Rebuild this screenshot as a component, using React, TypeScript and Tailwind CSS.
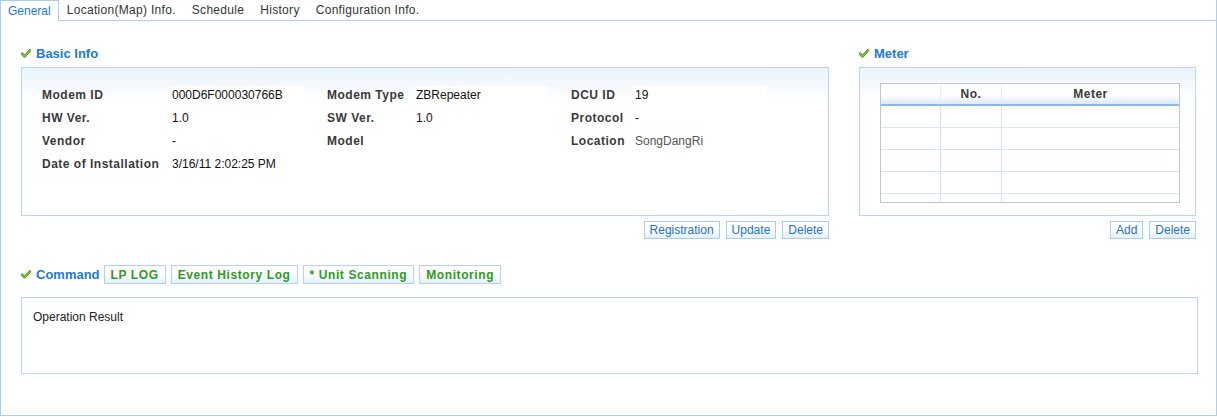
import React from 'react';

const Check = () => (
  <svg width="10" height="9" viewBox="0 0 10 9" className="shrink-0">
    <path d="M1 4.6 L3.6 7.4 L9 1.4" fill="none" stroke="#4f8f1c" strokeWidth="2.6" strokeLinecap="round" strokeLinejoin="round" />
    <path d="M1 4.6 L3.6 7.4 L9 1.4" fill="none" stroke="#8cc63f" strokeWidth="1.2" strokeLinecap="round" strokeLinejoin="round" />
  </svg>
);

function SectionTitle({ children }: { children: React.ReactNode }) {
  return (
    <div className="flex items-center gap-[5px] h-[16px]">
      <Check />
      <span className="text-[13px] font-bold tracking-[0px] text-[#1b7bd0] leading-none">{children}</span>
    </div>
  );
}

function BlueButton({ children }: { children: React.ReactNode }) {
  return (
    <button className="h-[18px] px-[5px] border border-[#aacde9] bg-[linear-gradient(to_bottom,#ffffff_45%,#e2effb_100%)] text-[12px] leading-none text-[#1f6fc5]">
      {children}
    </button>
  );
}

function CmdButton({ children }: { children: React.ReactNode }) {
  return (
    <button className="h-[19px] px-[6px] border border-[#b3d3ee] bg-[linear-gradient(to_bottom,#ffffff_45%,#e3f0fb_100%)] text-[12px] font-bold tracking-[0.6px] leading-none text-[#2f9a22]">
      {children}
    </button>
  );
}

const rows: [string, string, string, string, string, string][] = [
  ['Modem ID', '000D6F000030766B', 'Modem Type', 'ZBRepeater', 'DCU ID', '19'],
  ['HW Ver.', '1.0', 'SW Ver.', '1.0', 'Protocol', '-'],
  ['Vendor', '-', 'Model', '', 'Location', 'SongDangRi'],
  ['Date of Installation', '3/16/11 2:02:25 PM', '', '', '', ''],
];

const label = 'text-[12px] font-bold tracking-[0.5px] text-[#3a3a3a] whitespace-nowrap';
const value = 'text-[12px] text-[#111] whitespace-nowrap';
const firstCell = 'inline-flex items-center -ml-[2px] pl-[2px] w-[134px] h-[18px] bg-white';

export default function App() {
  return (
    <div className="w-[1217px] h-[417px] bg-white font-['Liberation_Sans',Arial,sans-serif] flex flex-col">
      {/* tabs */}
      <div className="flex h-[21px] shrink-0">
        <div className="h-[21px] px-[7px] border-l border-t border-r border-[#a9d0f0] bg-white flex items-center text-[12px] text-[#1b7bd0]">
          General
        </div>
        <div className="flex-1 flex border-b border-r border-[#a9d0f0] text-[12px] text-[#333]">
          {['Location(Map) Info.', 'Schedule', 'History', 'Configuration Info.'].map((t) => (
            <div key={t} className="px-[8px] flex items-center tracking-[0.3px]">{t}</div>
          ))}
        </div>
      </div>

      {/* panel */}
      <div className="h-[395px] border-l border-r border-b border-[#a9d0f0] pl-[20px] pr-[19px] pt-[24px]">
        <div className="flex gap-[30px]">
          {/* basic info */}
          <div className="w-[808px] flex flex-col">
            <SectionTitle>Basic Info</SectionTitle>
            <div className="mt-[6px] h-[149px] border border-[#bcd6ee] bg-[linear-gradient(to_bottom,#eaf3fd_0px,#ffffff_34px)] pl-[20px] pt-[15px]">
              <div className="grid grid-cols-[130px_155px_89px_155px_64px_1fr] auto-rows-[23px] items-center">
                {rows.map((r, i) => (
                  <React.Fragment key={i}>
                    <div className={label}>{r[0]}</div>
                    <div className={value}>
                      <span className={i === 0 ? firstCell : ''}>{r[1]}</span>
                    </div>
                    <div className={label}>{r[2]}</div>
                    <div className={value}>
                      <span className={i === 0 ? firstCell : ''}>{r[3]}</span>
                    </div>
                    <div className={label}>{r[4]}</div>
                    <div className={i === 2 ? 'text-[12px] text-[#555] whitespace-nowrap' : value}>
                      <span className={i === 0 ? firstCell : ''}>{r[5]}</span>
                    </div>
                  </React.Fragment>
                ))}
              </div>
            </div>
            <div className="mt-[5px] flex justify-end gap-[6px]">
              <BlueButton>Registration</BlueButton>
              <BlueButton>Update</BlueButton>
              <BlueButton>Delete</BlueButton>
            </div>
          </div>

          {/* meter */}
          <div className="w-[337px] flex flex-col">
            <SectionTitle>Meter</SectionTitle>
            <div className="mt-[6px] h-[149px] border border-[#bcd6ee] bg-[linear-gradient(to_bottom,#eaf3fd_0px,#ffffff_34px)] pl-[20px] pt-[15px]">
              <div className="w-[300px] h-[120px] border border-[#c4c4c4] overflow-hidden bg-white">
                <div className="flex h-[22px] border-b-2 border-[#8db9e4] bg-[linear-gradient(to_bottom,#ffffff_55%,#dbe9f8_100%)] text-[12px] font-bold tracking-[0.5px] text-[#3a3a3a]">
                  <div className="w-[60px] border-r border-[#e6eef6]" />
                  <div className="w-[61px] border-r border-[#e6eef6] flex items-center justify-center">No.</div>
                  <div className="flex-1 flex items-center justify-center">Meter</div>
                </div>
                {[0, 1, 2, 3, 4].map((i) => (
                  <div key={i} className="flex h-[22px] border-b border-[#d5e5f5]">
                    <div className="w-[60px] border-r border-[#d5e5f5]" />
                    <div className="w-[61px] border-r border-[#d5e5f5]" />
                    <div className="flex-1" />
                  </div>
                ))}
              </div>
            </div>
            <div className="mt-[5px] flex justify-end gap-[6px]">
              <BlueButton>Add</BlueButton>
              <BlueButton>Delete</BlueButton>
            </div>
          </div>
        </div>

        {/* command */}
        <div className="mt-[26px] flex items-center h-[19px]">
          <SectionTitle>Command</SectionTitle>
          <div className="ml-[4px] flex gap-[5px]">
            <CmdButton>LP LOG</CmdButton>
            <CmdButton>Event History Log</CmdButton>
            <CmdButton>* Unit Scanning</CmdButton>
            <CmdButton>Monitoring</CmdButton>
          </div>
        </div>

        <div className="mt-[13px] w-[1177px] h-[77px] border border-[#bcd6ee] pl-[11px] pt-[10px] text-[12px] text-[#222]">
          Operation Result
        </div>
      </div>
    </div>
  );
}
